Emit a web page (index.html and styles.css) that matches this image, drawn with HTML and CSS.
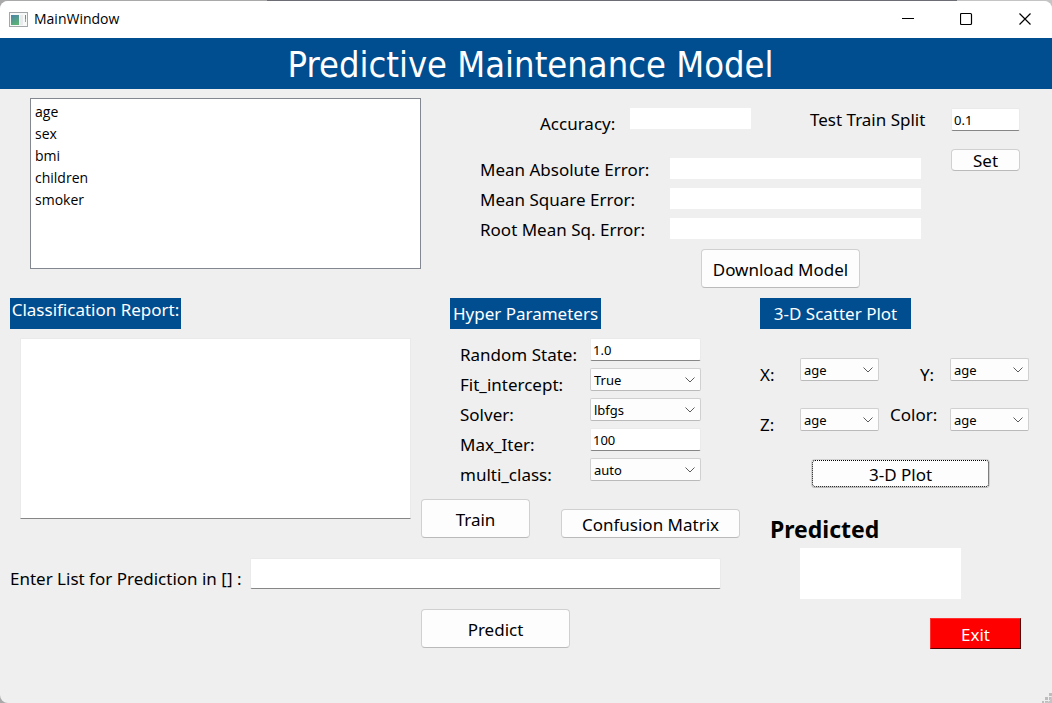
FILE: index.html
```html
<!DOCTYPE html>
<html lang="en">
<head>
<meta charset="utf-8">
<title>MainWindow</title>
<link rel="stylesheet" href="styles.css">
</head>
<body>
<div class="window">
  <header class="titlebar">
    <svg class="app-icon" width="19" height="15" viewBox="0 0 19 15" aria-hidden="true">
      <defs><linearGradient id="pane" x1="0" y1="0" x2="0.4" y2="1"><stop offset="0" stop-color="#4a82a8"/><stop offset="1" stop-color="#5cb078"/></linearGradient></defs>
      <rect x="0.5" y="0.5" width="18" height="14" fill="#f7f8f8" stroke="#a3a7aa"/>
      <rect x="2" y="3" width="8" height="10" fill="url(#pane)"/>
      <rect x="11" y="3" width="3" height="10" fill="#e8eaec"/>
      <path d="M16.500 3v4" stroke="#5a93a8"/><path d="M16.500 7v3" stroke="#7cba91"/>
    </svg>
    <span class="window-name">MainWindow</span>
    <button class="window-button" type="button" aria-label="Minimize"><svg width="14" height="14" viewBox="0 0 14 14"><path d="M0 6.500h12" stroke="#000" fill="none"/></svg></button>
    <button class="window-button" type="button" aria-label="Maximize"><svg width="14" height="14" viewBox="0 0 14 14"><rect x="0.500" y="1.500" width="11" height="11" rx="1" stroke="#000" stroke-width="1.200" fill="none"/></svg></button>
    <button class="window-button" type="button" aria-label="Close"><svg width="14" height="14" viewBox="0 0 14 14"><path d="M2.500 1.500l11 11M13.500 1.500L2.500 12.500" stroke="#000" stroke-width="1.200" fill="none"/></svg></button>
  </header>
  <h1 class="banner">Predictive Maintenance Model</h1>

  <main>
    <section class="top">
      <ul class="feature-list">
        <li>age</li><li>sex</li><li>bmi</li><li>children</li><li>smoker</li>
      </ul>
      <div class="metrics">
        <div class="accuracy-row">
          <span class="accuracy-label">Accuracy:</span>
          <output class="readout accuracy" aria-label="Accuracy"></output>
          <label class="split-label" for="split">Test Train Split</label>
        </div>
        <div class="metric"><span>Mean Absolute Error:</span><output class="readout" aria-label="Mean Absolute Error"></output></div>
        <div class="metric"><span>Mean Square Error:</span><output class="readout" aria-label="Mean Square Error"></output></div>
        <div class="metric"><span>Root Mean Sq. Error:</span><output class="readout" aria-label="Root Mean Squared Error"></output></div>
        <button class="button download" type="button">Download Model</button>
      </div>
      <div class="split">
        <input class="field" id="split" type="text" value="0.1">
        <button class="button set" type="button">Set</button>
      </div>
    </section>

    <div class="lower">
      <div class="model">
        <section class="report">
          <label class="badge badge-report" for="report">Classification Report:</label>
          <textarea class="report-text" id="report" readonly></textarea>
        </section>
        <section class="hyper">
          <h2 class="badge badge-hyper">Hyper Parameters</h2>
          <div class="params">
            <label for="random-state">Random State:</label>
            <input class="field" id="random-state" type="text" value="1.0">
            <label for="intercept">Fit_intercept:</label>
            <div class="combo"><select id="intercept"><option>True</option><option>False</option></select><svg width="10" height="6" viewBox="0 0 10 6"><path d="M0.500 0.500L5 5l4.500-4.500"/></svg></div>
            <label for="solver">Solver:</label>
            <div class="combo"><select id="solver"><option>lbfgs</option></select><svg width="10" height="6" viewBox="0 0 10 6"><path d="M0.500 0.500L5 5l4.500-4.500"/></svg></div>
            <label for="max-iter">Max_Iter:</label>
            <input class="field" id="max-iter" type="text" value="100">
            <label for="multi-class">multi_class:</label>
            <div class="combo"><select id="multi-class"><option>auto</option></select><svg width="10" height="6" viewBox="0 0 10 6"><path d="M0.500 0.500L5 5l4.500-4.500"/></svg></div>
          </div>
          <div class="train-row">
            <button class="button train" type="button">Train</button>
            <button class="button confusion" type="button">Confusion Matrix</button>
          </div>
        </section>
        <div class="predict-row">
          <label for="values">Enter List for Prediction in [] :</label>
          <input class="field" id="values" type="text">
        </div>
        <button class="button predict" type="button">Predict</button>
      </div>

      <div class="side">
        <h2 class="badge badge-plot">3-D Scatter Plot</h2>
        <div class="axes">
          <label for="axis-x">X:</label>
          <div class="combo"><select id="axis-x"><option>age</option><option>sex</option><option>bmi</option></select><svg width="10" height="6" viewBox="0 0 10 6"><path d="M0.500 0.500L5 5l4.500-4.500"/></svg></div>
          <label class="second" for="axis-y">Y:</label>
          <div class="combo"><select id="axis-y"><option>age</option><option>sex</option><option>bmi</option></select><svg width="10" height="6" viewBox="0 0 10 6"><path d="M0.500 0.500L5 5l4.500-4.500"/></svg></div>
          <label for="axis-z">Z:</label>
          <div class="combo"><select id="axis-z"><option>age</option><option>sex</option><option>bmi</option></select><svg width="10" height="6" viewBox="0 0 10 6"><path d="M0.500 0.500L5 5l4.500-4.500"/></svg></div>
          <label class="second color" for="axis-color">Color:</label>
          <div class="combo"><select id="axis-color"><option>age</option><option>sex</option><option>bmi</option></select><svg width="10" height="6" viewBox="0 0 10 6"><path d="M0.500 0.500L5 5l4.500-4.500"/></svg></div>
        </div>
        <button class="button plot" type="button">3-D Plot</button>
        <h2 class="predicted-title">Predicted</h2>
        <output class="readout predicted" aria-label="Predicted"></output>
        <button class="exit" type="button">Exit</button>
      </div>
    </div>
  </main>
  <svg class="grip" width="10" height="10" viewBox="0 0 10 10" aria-hidden="true"><path fill="#bdbdbd" d="M7 0h3v3h-3zM3 4h3v3h-3zM7 4h3v3h-3zM0 8h2v2h-2zM3 8h3v2h-3zM7 8h3v2h-3z"/></svg>
</div>
</body>
</html>
```
FILE: styles.css
```css
* {
  box-sizing: border-box;
}

body {
  margin: 0;
  background: linear-gradient(90deg, #a9a9a9 0 267px, #6d6d76 267px 91%, #c4c4c4 91%);
  font: 17px/24px "Noto Sans", sans-serif;
  color: #000;
}

button,
input,
select,
textarea {
  font: inherit;
  color: inherit;
  margin: 0;
}

h1,
h2,
ul {
  margin: 0;
  padding: 0;
  font-weight: normal;
}

.window {
  position: relative;
  display: flex;
  flex-direction: column;
  min-height: calc(100vh - 1px);
  margin-top: 1px;
  background: #efefef;
  border-radius: 8px;
  overflow: hidden;
}

.titlebar {
  display: flex;
  align-items: center;
  height: 37px;
  padding: 0 0 1px 9px;
  background: #fff;
  font: 14px/20px "Open Sans", "Noto Sans", sans-serif;
}

.window-name {
  flex: 1;
  padding-left: 6px;
}

.window-button {
  display: grid;
  place-items: center;
  width: 58px;
  height: 36px;
  padding: 0;
  border: 0;
  background: none;
}

.window-button:last-child {
  width: 56px;
}

.banner {
  height: 51px;
  padding-left: 9px;
  background: #004e90;
  color: #fff;
  font: 36px/53px "DejaVu Sans Condensed", "DejaVu Sans", sans-serif;
  font-stretch: condensed;
  text-align: center;
}

.top {
  display: grid;
  grid-template-columns: 1fr 471px 69px;
  padding: 9px 32px 0 30px;
}

.feature-list {
  height: 171px;
  margin-right: 59px;
  padding: 2px 4px;
  background: #fff;
  border: 1px solid #828790;
  list-style: none;
  font: 14px/22px "Open Sans", "Noto Sans", sans-serif;
}

.readout {
  display: block;
  width: 251px;
  height: 21px;
  background: #fff;
}

.metrics {
  padding-top: 10px;
}

.accuracy-row {
  display: flex;
  height: 50px;
  padding-left: 60px;
}

.accuracy-label {
  width: 90px;
  padding-top: 4px;
}

.accuracy {
  width: 121px;
}

.split-label {
  margin-left: 59px;
  white-space: nowrap;
}

.metric {
  display: flex;
  height: 30px;
}

.metric span {
  width: 190px;
}

.button {
  display: block;
  padding: 2px 0 0;
  background: #fdfdfd;
  border: 1px solid #d0d0d0;
  border-bottom-color: #bababa;
  border-radius: 4px;
  text-align: center;
}

.download {
  width: 159px;
  height: 39px;
  margin: 1px 0 0 221px;
}

.field {
  display: block;
  width: 100%;
  height: 23px;
  padding: 1px 2px 0;
  border: 1px solid #eaeaea;
  border-bottom-color: #868686;
  border-radius: 2px;
  background: #fff;
  font-size: 13px;
  line-height: 18px;
}

.split {
  padding-top: 10px;
}

.set {
  width: 100%;
  height: 22px;
  margin-top: 18px;
  line-height: 18px;
}

.lower {
  display: grid;
  grid-template-columns: 740fr 292fr;
  column-gap: 20px;
  padding-top: 10px;
}

.model {
  display: grid;
  grid-template-columns: 1fr 319px;
  column-gap: 10px;
  align-content: start;
  padding-left: 10px;
}

.badge {
  display: block;
  height: 31px;
  background: #004e90;
  color: #fff;
  font-size: 17px;
  line-height: 31px;
  text-align: center;
  white-space: nowrap;
}

.badge-report {
  width: 171px;
  line-height: 24px;
}

.badge-hyper {
  width: 151px;
  margin-left: 29px;
}

.badge-plot {
  width: 151px;
}

.report {
  display: flex;
  flex-direction: column;
}

.report-text {
  height: 181px;
  margin: 9px 0 0 10px;
  border: 1px solid #eaeaea;
  border-bottom-color: #868686;
  background: #fff;
  resize: none;
}

.params {
  display: grid;
  grid-template-columns: 130px 111px;
  grid-auto-rows: 30px;
  padding: 9px 0 0 39px;
}

.params label {
  padding-top: 5px;
}

.combo {
  position: relative;
  height: 24px;
}

.combo select {
  display: block;
  width: 100%;
  height: 23px;
  padding: 1px 3px 0;
  border: 1px solid #d0d0d0;
  border-bottom-color: #bababa;
  border-radius: 2px;
  background: #fdfdfd;
  font-size: 13px;
  line-height: 18px;
  appearance: none;
}

.combo svg {
  position: absolute;
  top: 9px;
  right: 6px;
  fill: none;
  stroke: #5c5c5c;
  pointer-events: none;
}

.train-row {
  display: flex;
  justify-content: space-between;
  align-items: flex-end;
  margin-top: 11px;
}

.train {
  width: 109px;
  height: 39px;
}

.confusion {
  width: 179px;
  height: 29px;
}

.predict-row {
  grid-column: 1 / -1;
  display: grid;
  grid-template-columns: 240px 1fr;
  align-items: start;
  margin: 20px 19px 0 0;
}

.predict-row label {
  padding-top: 9px;
  white-space: nowrap;
}

.predict-row .field {
  height: 31px;
}

.predict {
  grid-column: 2;
  width: 149px;
  height: 39px;
  margin-top: 18px;
}

.axes {
  display: grid;
  grid-template-columns: 40px 79px 71px 79px;
  grid-auto-rows: 50px;
  padding-top: 29px;
}

.axes label {
  padding-top: 5px;
}

.axes .second {
  padding-left: 41px;
}

.axes .color {
  padding: 0 0 0 11px;
  margin-top: -5px;
}

.plot {
  width: 179px;
  height: 29px;
  margin: 1px 0 0 51px;
  outline: 1px dotted #000;
  outline-offset: -2px;
}

.predicted-title {
  padding: 29px 0 6px 10px;
  font-size: 23px;
  font-weight: bold;
  line-height: 25px;
}

.predicted {
  width: 161px;
  height: 51px;
  margin-left: 40px;
}

.exit {
  display: block;
  width: 91px;
  height: 31px;
  margin: 19px 0 0 170px;
  padding: 2px 0 0;
  border: 1px solid #ff3030;
  border-right: 1px solid #500000;
  border-bottom: 1px solid #500000;
  background: #f00;
  color: #fff;
}

.grip {
  position: absolute;
  right: 0;
  bottom: 0;
}
```
